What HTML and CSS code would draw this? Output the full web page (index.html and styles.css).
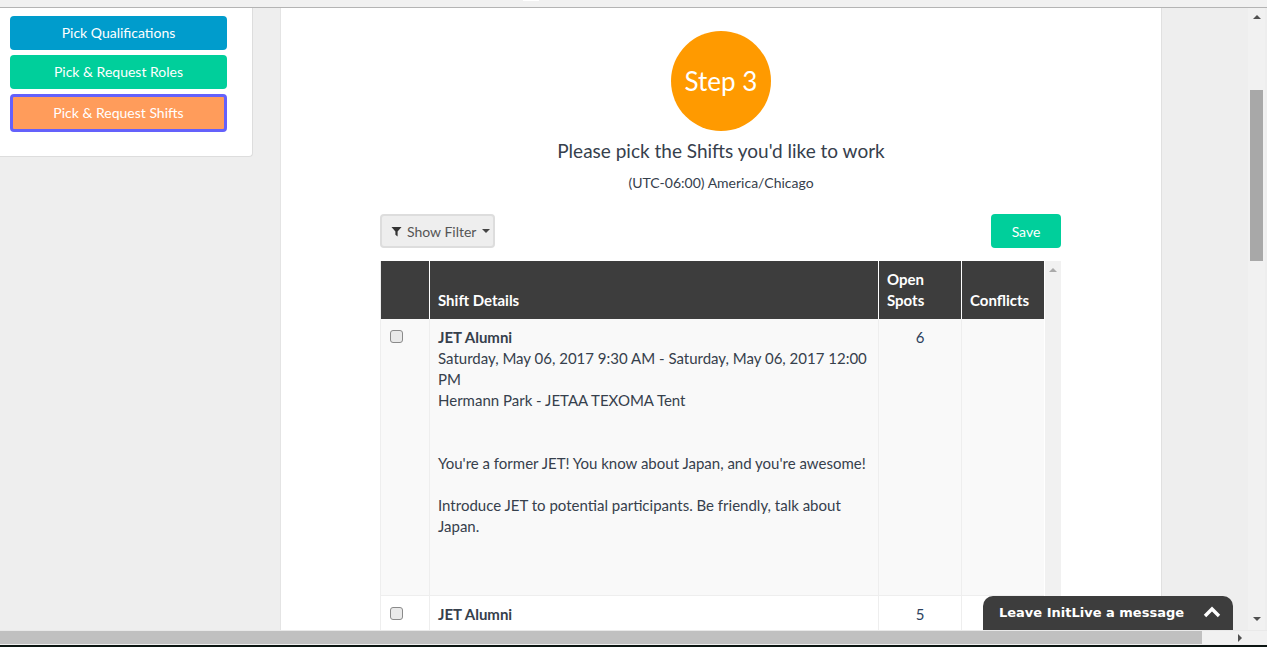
FILE: index.html
```html
<!DOCTYPE html>
<html lang="en">
<head>
    <meta charset="UTF-8">
    <meta name="viewport" content="width=device-width, initial-scale=1.0">
    <title>Pick Shifts</title>
    <link rel="stylesheet" href="styles.css">
</head>
<body>
    <div class="topbar"><span class="topbar-notch"></span></div>
    <div class="viewport">
        <div class="side">
            <div class="side-panel">
                <a class="step-btn btn-blue">Pick Qualifications</a>
                <a class="step-btn btn-green">Pick &amp; Request Roles</a>
                <a class="step-btn btn-orange">Pick &amp; Request Shifts</a>
            </div>
        </div>
        <div class="main">
            <div class="step-circle">Step 3</div>
            <h2 class="step-title">Please pick the Shifts you'd like to work</h2>
            <p class="timezone">(UTC-06:00) America/Chicago</p>
            <div class="content">
                <div class="toolbar">
                    <button class="filter-btn">
                        <svg class="filter-icon" viewBox="0 0 12 12"><path d="M0.5 1h11L7.2 6v5.5L4.8 9.6V6z"/></svg>
                        Show Filter
                        <span class="caret"></span>
                    </button>
                    <button class="save-btn">Save</button>
                </div>
                <div class="table-wrap">
                    <table class="shifts">
                        <thead>
                            <tr>
                                <th class="col-check"></th>
                                <th class="col-details">Shift Details</th>
                                <th class="col-open">Open Spots</th>
                                <th class="col-conflicts">Conflicts</th>
                            </tr>
                        </thead>
                        <tbody>
                            <tr class="odd">
                                <td><span class="check"></span></td>
                                <td>
                                    <strong>JET Alumni</strong><br>
                                    Saturday, May 06, 2017 9:30 AM - Saturday, May 06, 2017 12:00 PM<br>
                                    Hermann Park - JETAA TEXOMA Tent
                                    <p class="desc">You're a former JET! You know about Japan, and you're awesome!</p>
                                    <p class="desc-last">Introduce JET to potential participants. Be friendly, talk about Japan.</p>
                                </td>
                                <td class="num">6</td>
                                <td></td>
                            </tr>
                            <tr>
                                <td><span class="check"></span></td>
                                <td>
                                    <strong>JET Alumni</strong><br>
                                    Saturday, May 06, 2017 12:00 PM - Saturday, May 06, 2017 2:30 PM<br>
                                    Hermann Park - JETAA TEXOMA Tent
                                </td>
                                <td class="num">5</td>
                                <td></td>
                            </tr>
                        </tbody>
                    </table>
                    <div class="table-scroll"><span class="arrow-up light"></span></div>
                </div>
            </div>
        </div>
        <div class="gutter"></div>
        <div class="vscroll">
            <span class="arrow-up"></span>
            <div class="vthumb"></div>
            <span class="arrow-down"></span>
        </div>
        <div class="chat">
            <span>Leave InitLive a message</span>
            <svg class="chevron" viewBox="0 0 18 12"><path d="M2 10l7-7 7 7" fill="none" stroke="#fff" stroke-width="3.4"/></svg>
        </div>
    </div>
    <div class="hscroll">
        <div class="hthumb"></div>
        <span class="arrow-right"></span>
    </div>
    <div class="taskbar"></div>
</body>
</html>
```

FILE: styles.css
```css
/* Page frame */
html, body {
    height: 100%;
}

body {
    margin: 0;
    display: flex;
    flex-direction: column;
    height: 647px;
    overflow: hidden;
    background: #eee;
    color: #36404c;
    font-family: Lato, "Open Sans", sans-serif;
    font-size: 15px;
    line-height: 21px;
}

.topbar {
    flex: none;
    height: 7px;
    background: #f1f1f1;
    border-bottom: 1px solid #b4b4b4;
    overflow: hidden;
}

.topbar-notch {
    display: block;
    width: 16px;
    height: 1px;
    margin-left: 523px;
    background: #fff;
}

.viewport {
    flex: 1;
    min-height: 0;
    display: flex;
    position: relative;
}

/* Left steps */
.side {
    flex: none;
    width: 280px;
}

.side-panel {
    width: 253px;
    height: 149px;
    box-sizing: border-box;
    padding: 8px 25px 0 10px;
    background: #fff;
    border-right: 1px solid #ddd;
    border-bottom: 1px solid #ddd;
    border-radius: 0 0 4px 0;
}

.step-btn {
    display: block;
    height: 34px;
    margin-bottom: 5px;
    border-radius: 4px;
    color: #fff;
    font-size: 14px;
    line-height: 34px;
    text-align: center;
}

.btn-blue {
    background: #009ccc;
}

.btn-green {
    background: #00cf9b;
    margin-bottom: 5px;
}

.btn-orange {
    height: 38px;
    box-sizing: border-box;
    background: #ff9c5b;
    border: 3px solid #6461fb;
    line-height: 32px;
}

/* Main column */
.main {
    flex: none;
    width: 882px;
    box-sizing: border-box;
    padding-top: 23px;
    background: #fff;
    border-left: 1px solid #e4e4e4;
    border-right: 1px solid #e0e0e0;
    overflow: hidden;
    text-align: center;
}

.step-circle {
    width: 100px;
    height: 100px;
    margin: 0 auto;
    border-radius: 50%;
    background: #ff9a00;
    color: #fff;
    font-size: 26px;
    line-height: 100px;
}

.step-title {
    margin: 8px 0 0;
    font-size: 19px;
    font-weight: 400;
    line-height: 24px;
}

.timezone {
    margin: 9px 0 0;
    font-size: 14px;
    line-height: 21px;
}

.content {
    width: 681px;
    margin: 21px 0 0 99px;
    text-align: left;
}

.toolbar {
    display: flex;
    justify-content: space-between;
    margin-bottom: 13px;
}

.filter-btn {
    display: flex;
    align-items: center;
    width: 115px;
    height: 34px;
    padding: 0 0 0 9px;
    background: #eee;
    border: 2px solid #ddd;
    border-radius: 4px;
    color: #555;
    font-family: inherit;
    font-size: 14px;
}

.filter-icon {
    width: 11px;
    height: 11px;
    margin-right: 5px;
    fill: #333;
}

.caret {
    width: 0;
    height: 0;
    margin-left: 6px;
    border-left: 4px solid transparent;
    border-right: 4px solid transparent;
    border-top: 4px solid #444;
}

.save-btn {
    width: 70px;
    height: 34px;
    padding: 0;
    background: #00cf9b;
    border: 0;
    border-radius: 4px;
    color: #fff;
    font-family: inherit;
    font-size: 14px;
}

/* Shifts table */
.table-wrap {
    display: flex;
}

.shifts {
    flex: none;
    width: 664px;
    table-layout: fixed;
    border-collapse: collapse;
    border-left: 1px solid #eee;
}

.shifts th {
    padding: 8px;
    background: #3d3d3d;
    border-left: 1px solid #fff;
    color: #fff;
    font-size: 15px;
    font-weight: 700;
    text-align: left;
    vertical-align: bottom;
    overflow: hidden;
}

.shifts th:first-child {
    border-left: 0;
}

.col-check {
    width: 32px;
}

.col-open {
    width: 66px;
}

.col-conflicts {
    width: 66px;
}

.shifts td {
    padding: 8px;
    border-left: 1px solid #eee;
    border-bottom: 1px solid #eee;
    vertical-align: top;
}

.shifts td:first-child {
    border-left: 0;
}

.odd td {
    background: #f9f9f9;
}

.shifts td.num {
    text-align: center;
    color: #2b3f5c;
}

.shifts strong {
    font-weight: 700;
}

.check {
    display: block;
    width: 11px;
    height: 11px;
    margin: 3px 0 0 1px;
    background: #e9e9e9;
    border: 1px solid #8a8a8a;
    border-radius: 3px;
}

.desc {
    margin: 42px 0 0;
}

.desc-last {
    margin: 21px 0 50px;
}

.table-scroll {
    flex: none;
    width: 16px;
    margin-left: 1px;
    background: #f1f1f1;
    text-align: center;
}

/* Browser scrollbars */
.gutter {
    flex: none;
    width: 86px;
}

.vscroll {
    flex: none;
    width: 17px;
    background: #f1f1f1;
    display: flex;
    flex-direction: column;
    align-items: center;
}

.vthumb {
    width: 13px;
    height: 171px;
    margin-top: 71px;
    background: #a8a8a8;
}

.arrow-up,
.arrow-down,
.arrow-right {
    display: block;
    width: 0;
    height: 0;
}

.arrow-up {
    margin-top: 7px;
    border-left: 4px solid transparent;
    border-right: 4px solid transparent;
    border-bottom: 4px solid #505050;
}

.arrow-up.light {
    display: inline-block;
    border-bottom-color: #aaa;
    vertical-align: top;
}

.arrow-down {
    margin-top: auto;
    margin-bottom: 9px;
    border-left: 4px solid transparent;
    border-right: 4px solid transparent;
    border-top: 4px solid #505050;
}

.hscroll {
    flex: none;
    display: flex;
    align-items: center;
    height: 14px;
    background: #f1f1f1;
    border-top: 1px solid #e9e9e9;
    box-sizing: border-box;
}

.hthumb {
    width: 1202px;
    height: 13px;
    background: #c0c0c0;
}

.arrow-right {
    margin-left: 36px;
    border-top: 4px solid transparent;
    border-bottom: 4px solid transparent;
    border-left: 4px solid #505050;
}

.taskbar {
    flex: none;
    height: 2px;
    border-top: 1px solid #f1f1f1;
    background: #0c1512;
}

/* Chat widget */
.chat {
    position: absolute;
    left: 983px;
    bottom: 0;
    width: 250px;
    height: 34px;
    box-sizing: border-box;
    display: flex;
    align-items: center;
    justify-content: space-between;
    padding: 0 12px 2px 16px;
    background: #3d3d3d;
    border-radius: 10px 10px 0 0;
    color: #fff;
    font-family: "DejaVu Sans", Verdana, sans-serif;
    font-size: 13px;
    font-weight: 700;
}

.chevron {
    width: 18px;
    height: 12px;
}
```
